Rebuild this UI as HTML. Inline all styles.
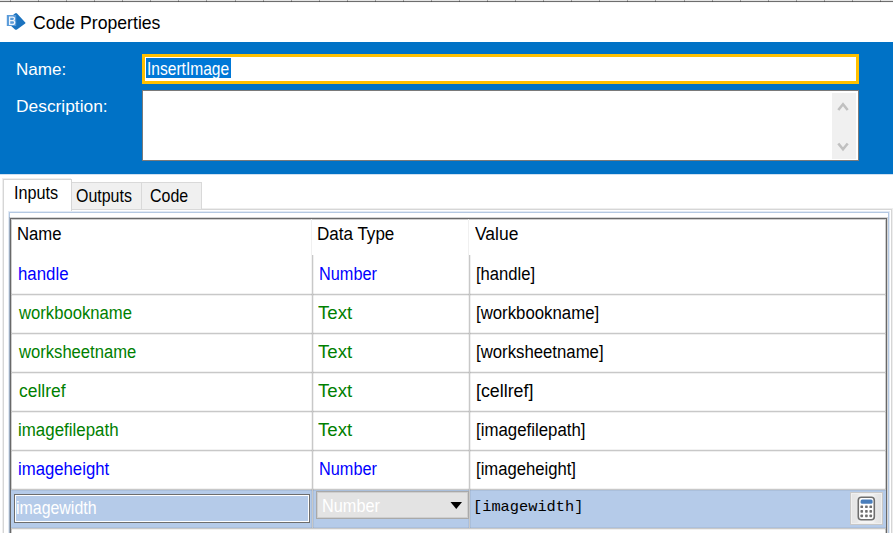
<!DOCTYPE html>
<html><head><meta charset="utf-8"><style>
html,body{margin:0;padding:0;}
body{width:893px;height:533px;overflow:hidden;position:relative;background:#fff;font-family:"Liberation Sans",sans-serif;}
.a{position:absolute;box-sizing:border-box;}
.t{position:absolute;white-space:nowrap;transform-origin:0 0;display:block;}
</style></head><body>
<div class="a" style="left:0;top:0;width:893px;height:1px;background:#e4e4e4"></div>
<div class="a" style="left:0;top:1px;width:893px;height:1px;background:#6e6e6e"></div>
<div class="a" style="left:0;top:2px;width:893px;height:1px;background:#f6f6f6"></div>
<div style="position:absolute;left:10px;top:0;width:1px;height:1px;background:#a0a0a0"></div><div style="position:absolute;left:10px;top:1px;width:1px;height:1px;background:#555"></div><div style="position:absolute;left:38px;top:0;width:1px;height:1px;background:#a0a0a0"></div><div style="position:absolute;left:38px;top:1px;width:1px;height:1px;background:#555"></div><div style="position:absolute;left:66px;top:0;width:1px;height:1px;background:#a0a0a0"></div><div style="position:absolute;left:66px;top:1px;width:1px;height:1px;background:#555"></div><div style="position:absolute;left:94px;top:0;width:1px;height:1px;background:#a0a0a0"></div><div style="position:absolute;left:94px;top:1px;width:1px;height:1px;background:#555"></div><div style="position:absolute;left:122px;top:0;width:1px;height:1px;background:#a0a0a0"></div><div style="position:absolute;left:122px;top:1px;width:1px;height:1px;background:#555"></div><div style="position:absolute;left:150px;top:0;width:1px;height:1px;background:#a0a0a0"></div><div style="position:absolute;left:150px;top:1px;width:1px;height:1px;background:#555"></div><div style="position:absolute;left:178px;top:0;width:1px;height:1px;background:#a0a0a0"></div><div style="position:absolute;left:178px;top:1px;width:1px;height:1px;background:#555"></div><div style="position:absolute;left:206px;top:0;width:1px;height:1px;background:#a0a0a0"></div><div style="position:absolute;left:206px;top:1px;width:1px;height:1px;background:#555"></div><div style="position:absolute;left:235px;top:0;width:1px;height:1px;background:#a0a0a0"></div><div style="position:absolute;left:235px;top:1px;width:1px;height:1px;background:#555"></div><div style="position:absolute;left:263px;top:0;width:1px;height:1px;background:#a0a0a0"></div><div style="position:absolute;left:263px;top:1px;width:1px;height:1px;background:#555"></div><div style="position:absolute;left:291px;top:0;width:1px;height:1px;background:#a0a0a0"></div><div style="position:absolute;left:291px;top:1px;width:1px;height:1px;background:#555"></div><div style="position:absolute;left:319px;top:0;width:1px;height:1px;background:#a0a0a0"></div><div style="position:absolute;left:319px;top:1px;width:1px;height:1px;background:#555"></div><div style="position:absolute;left:347px;top:0;width:1px;height:1px;background:#a0a0a0"></div><div style="position:absolute;left:347px;top:1px;width:1px;height:1px;background:#555"></div><div style="position:absolute;left:375px;top:0;width:1px;height:1px;background:#a0a0a0"></div><div style="position:absolute;left:375px;top:1px;width:1px;height:1px;background:#555"></div><div style="position:absolute;left:403px;top:0;width:1px;height:1px;background:#a0a0a0"></div><div style="position:absolute;left:403px;top:1px;width:1px;height:1px;background:#555"></div><div style="position:absolute;left:431px;top:0;width:1px;height:1px;background:#a0a0a0"></div><div style="position:absolute;left:431px;top:1px;width:1px;height:1px;background:#555"></div><div style="position:absolute;left:459px;top:0;width:1px;height:1px;background:#a0a0a0"></div><div style="position:absolute;left:459px;top:1px;width:1px;height:1px;background:#555"></div><div style="position:absolute;left:487px;top:0;width:1px;height:1px;background:#a0a0a0"></div><div style="position:absolute;left:487px;top:1px;width:1px;height:1px;background:#555"></div><div style="position:absolute;left:515px;top:0;width:1px;height:1px;background:#a0a0a0"></div><div style="position:absolute;left:515px;top:1px;width:1px;height:1px;background:#555"></div><div style="position:absolute;left:543px;top:0;width:1px;height:1px;background:#a0a0a0"></div><div style="position:absolute;left:543px;top:1px;width:1px;height:1px;background:#555"></div><div style="position:absolute;left:571px;top:0;width:1px;height:1px;background:#a0a0a0"></div><div style="position:absolute;left:571px;top:1px;width:1px;height:1px;background:#555"></div><div style="position:absolute;left:599px;top:0;width:1px;height:1px;background:#a0a0a0"></div><div style="position:absolute;left:599px;top:1px;width:1px;height:1px;background:#555"></div><div style="position:absolute;left:627px;top:0;width:1px;height:1px;background:#a0a0a0"></div><div style="position:absolute;left:627px;top:1px;width:1px;height:1px;background:#555"></div><div style="position:absolute;left:655px;top:0;width:1px;height:1px;background:#a0a0a0"></div><div style="position:absolute;left:655px;top:1px;width:1px;height:1px;background:#555"></div><div style="position:absolute;left:684px;top:0;width:1px;height:1px;background:#a0a0a0"></div><div style="position:absolute;left:684px;top:1px;width:1px;height:1px;background:#555"></div><div style="position:absolute;left:712px;top:0;width:1px;height:1px;background:#a0a0a0"></div><div style="position:absolute;left:712px;top:1px;width:1px;height:1px;background:#555"></div><div style="position:absolute;left:740px;top:0;width:1px;height:1px;background:#a0a0a0"></div><div style="position:absolute;left:740px;top:1px;width:1px;height:1px;background:#555"></div><div style="position:absolute;left:768px;top:0;width:1px;height:1px;background:#a0a0a0"></div><div style="position:absolute;left:768px;top:1px;width:1px;height:1px;background:#555"></div><div style="position:absolute;left:796px;top:0;width:1px;height:1px;background:#a0a0a0"></div><div style="position:absolute;left:796px;top:1px;width:1px;height:1px;background:#555"></div><div style="position:absolute;left:824px;top:0;width:1px;height:1px;background:#a0a0a0"></div><div style="position:absolute;left:824px;top:1px;width:1px;height:1px;background:#555"></div><div style="position:absolute;left:852px;top:0;width:1px;height:1px;background:#a0a0a0"></div><div style="position:absolute;left:852px;top:1px;width:1px;height:1px;background:#555"></div><div style="position:absolute;left:880px;top:0;width:1px;height:1px;background:#a0a0a0"></div><div style="position:absolute;left:880px;top:1px;width:1px;height:1px;background:#555"></div>
<svg class="a" style="left:0;top:0" width="40" height="40" viewBox="0 0 40 40">
  <path d="M15 13.6 Q16 12.6 17 13.6 L25.3 22.4 Q25.8 23 25.2 23.6 L17 29.4 Q16 30.1 15 29.4 L9 24 L9 18 Z" fill="#1b73bf"/>
  <rect x="6.8" y="15" width="9.4" height="11" fill="#5a9bd9"/>
  <path d="M9.6 17.1 h3.2 a1.75 1.75 0 0 1 0 3.5 h-3.2 z M9.6 20.6 h3.2 a1.9 1.9 0 0 1 0 3.8 h-3.2 z" fill="none" stroke="#fff" stroke-width="1.3" opacity="0.9"/>
</svg>
<div class="a" style="left:0;top:42px;width:893px;height:132px;background:#0072c6;box-shadow:0 1px 0 #cfe0f1"></div>
<div class="a" style="left:142px;top:54px;width:717px;height:30px;border:3px solid #ffc000;background:#fff"></div>
<div class="a" style="left:146px;top:58px;width:85px;height:20px;background:#0078d7"></div>
<div class="a" style="left:142px;top:90px;width:717px;height:71px;border:1px solid #7a7a7a;background:#fff"></div>
<div class="a" style="left:832px;top:93px;width:24px;height:66px;background:#f0f0f0"></div>
<svg class="a" style="left:832px;top:93px" width="24" height="66" viewBox="0 0 24 66">
  <path d="M6.3 17 L11 11.2 L15.7 17" fill="none" stroke="#c0c0c0" stroke-width="2.6"/>
  <path d="M6.3 50.5 L11 56.3 L15.7 50.5" fill="none" stroke="#c0c0c0" stroke-width="2.6"/>
</svg>
<!-- tab page -->
<div class="a" style="left:3px;top:209px;width:889px;height:330px;border:1px solid #d6d6d6;box-shadow:0 0 0 1px #eeeeee;background:#fff"></div>
<div class="a" style="left:71px;top:182px;width:71px;height:28px;border:1px solid #d9d9d9;background:#f0f0f0"></div>
<div class="a" style="left:141px;top:182px;width:61px;height:28px;border:1px solid #d9d9d9;background:#f0f0f0"></div>
<div class="a" style="left:3px;top:179px;width:69px;height:32px;border:1px solid #d6d6d6;border-bottom:none;background:#fff;box-shadow:-1px -1px 0 #eeeeee"></div>
<!-- inner frame -->
<div class="a" style="left:9px;top:212px;width:880px;height:330px;border:1px solid #b4c8e2;box-shadow:0 0 0 1px #e2eaf4;background:#fff"></div>
<div class="a" style="left:10px;top:218px;width:877px;height:330px;border:1px solid #686868;box-shadow:0 0 0 1px rgba(90,90,90,0.25), inset 0 0 0 1px rgba(90,90,90,0.3);background:#fff"></div>
<!-- header separators -->
<div class="a" style="left:311px;top:219px;width:1px;height:36px;background:#f0f0f0"></div>
<div class="a" style="left:468px;top:219px;width:1px;height:36px;background:#f0f0f0"></div>
<!-- selected row -->
<div class="a" style="left:11px;top:490px;width:875px;height:38px;background:#b5cbe9"></div>
<div class="a" style="left:11px;top:294px;width:875px;height:1px;background:#c8c8c8;box-shadow:0 1px 0 rgba(0,0,0,0.06),0 -1px 0 rgba(0,0,0,0.05)"></div>
<div class="a" style="left:11px;top:333px;width:875px;height:1px;background:#c8c8c8;box-shadow:0 1px 0 rgba(0,0,0,0.06),0 -1px 0 rgba(0,0,0,0.05)"></div>
<div class="a" style="left:11px;top:372px;width:875px;height:1px;background:#c8c8c8;box-shadow:0 1px 0 rgba(0,0,0,0.06),0 -1px 0 rgba(0,0,0,0.05)"></div>
<div class="a" style="left:11px;top:411px;width:875px;height:1px;background:#c8c8c8;box-shadow:0 1px 0 rgba(0,0,0,0.06),0 -1px 0 rgba(0,0,0,0.05)"></div>
<div class="a" style="left:11px;top:450px;width:875px;height:1px;background:#c8c8c8;box-shadow:0 1px 0 rgba(0,0,0,0.06),0 -1px 0 rgba(0,0,0,0.05)"></div>
<div class="a" style="left:11px;top:489px;width:875px;height:1px;background:#c8c8c8;box-shadow:0 1px 0 rgba(0,0,0,0.06),0 -1px 0 rgba(0,0,0,0.05)"></div>
<div class="a" style="left:11px;top:528px;width:875px;height:1px;background:#c8c8c8;box-shadow:0 1px 0 rgba(0,0,0,0.06),0 -1px 0 rgba(0,0,0,0.05)"></div>
<div class="a" style="left:312px;top:255px;width:1px;height:273px;background:#c8c8c8;box-shadow:1px 0 0 rgba(0,0,0,0.06),-1px 0 0 rgba(0,0,0,0.05)"></div>
<div class="a" style="left:469px;top:255px;width:1px;height:273px;background:#c8c8c8;box-shadow:1px 0 0 rgba(0,0,0,0.06),-1px 0 0 rgba(0,0,0,0.05)"></div>
<!-- edit -->
<div class="a" style="left:14px;top:494px;width:296px;height:29px;border:1px solid #6d6d6d;background:#b5cbe9;box-shadow:inset 0 0 0 1px #fff"></div>
<!-- combo -->
<div class="a" style="left:316px;top:491px;width:153px;height:28px;border:1px solid #a9a9a9;background:#e3e3e3;box-shadow:inset 0 0 0 1px #cfcfcf"></div>
<svg class="a" style="left:445px;top:498px" width="20" height="14" viewBox="0 0 20 14"><path d="M5.5 4 L17 4 L11.25 11 Z" fill="#000"/></svg>
<!-- calc button -->
<div class="a" style="left:850px;top:492px;width:33px;height:33px;border:1px solid #c8c8c8;background:linear-gradient(90deg,#e4e4e4 0%,#e8e8e8 20%,#f4f4f4 30%,#f4f4f4 70%,#e8e8e8 80%,#e2e2e2 100%);box-shadow:inset 0 0 0 1px #f0f0f0"></div>
<svg class="a" style="left:850px;top:492px" width="33" height="33" viewBox="0 0 33 33">
  <rect x="8.3" y="5.3" width="16" height="22.4" rx="3" fill="#fff" stroke="#6e6e6e" stroke-width="1.6"/>
  <rect x="10.6" y="7.6" width="12" height="4.2" rx="1.5" fill="#4a7ebb"/>
  <rect x="10.45" y="13.45" width="2.6" height="2.6" rx="0.6" fill="#707070"/><rect x="10.45" y="18.10" width="2.6" height="2.6" rx="0.6" fill="#707070"/><rect x="10.45" y="22.60" width="2.6" height="2.6" rx="0.6" fill="#707070"/><rect x="15.10" y="13.45" width="2.6" height="2.6" rx="0.6" fill="#707070"/><rect x="15.10" y="18.10" width="2.6" height="2.6" rx="0.6" fill="#707070"/><rect x="15.10" y="22.60" width="2.6" height="2.6" rx="0.6" fill="#707070"/><rect x="19.45" y="13.45" width="2.6" height="2.6" rx="0.6" fill="#707070"/><rect x="19.45" y="18.10" width="2.6" height="2.6" rx="0.6" fill="#707070"/><rect x="19.45" y="22.60" width="2.6" height="2.6" rx="0.6" fill="#707070"/>
</svg>
<span class="t" id="t0" style="left:32.75px;top:12px;font-size:19.0px;line-height:21px;color:#000;font-family:'Liberation Sans', sans-serif;transform:scaleX(0.9281);">Code Properties</span>
<span class="t" id="t1" style="left:15.52px;top:60px;font-size:16.6px;line-height:19px;color:#fff;font-family:'Liberation Sans', sans-serif;transform:scaleX(1.0289);">Name:</span>
<span class="t" id="t2" style="left:15.96px;top:97px;font-size:16.4px;line-height:18px;color:#fff;font-family:'Liberation Sans', sans-serif;transform:scaleX(1.0593);">Description:</span>
<span class="t" id="t3" style="left:146.51px;top:59px;font-size:18.2px;line-height:20px;color:#fff;font-family:'Liberation Sans', sans-serif;transform:scaleX(0.8555);">InsertImage</span>
<span class="t" id="t4" style="left:13.94px;top:182px;font-size:18.8px;line-height:21px;color:#000;font-family:'Liberation Sans', sans-serif;transform:scaleX(0.8641);">Inputs</span>
<span class="t" id="t5" style="left:76.21px;top:185px;font-size:18.6px;line-height:21px;color:#000;font-family:'Liberation Sans', sans-serif;transform:scaleX(0.8580);">Outputs</span>
<span class="t" id="t6" style="left:149.65px;top:185px;font-size:18.6px;line-height:21px;color:#000;font-family:'Liberation Sans', sans-serif;transform:scaleX(0.8581);">Code</span>
<span class="t" id="t7" style="left:16.75px;top:223px;font-size:19.2px;line-height:21px;color:#000;font-family:'Liberation Sans', sans-serif;transform:scaleX(0.8709);">Name</span>
<span class="t" id="t8" style="left:316.67px;top:223px;font-size:19.2px;line-height:21px;color:#000;font-family:'Liberation Sans', sans-serif;transform:scaleX(0.8876);">Data Type</span>
<span class="t" id="t9" style="left:474.52px;top:223px;font-size:19.2px;line-height:21px;color:#000;font-family:'Liberation Sans', sans-serif;transform:scaleX(0.9097);">Value</span>
<span class="t" id="t10" style="left:18.23px;top:263px;font-size:19.2px;line-height:21px;color:#0000ff;font-family:'Liberation Sans', sans-serif;transform:scaleX(0.8764);">handle</span>
<span class="t" id="t11" style="left:319.09px;top:263px;font-size:19.2px;line-height:21px;color:#0000ff;font-family:'Liberation Sans', sans-serif;transform:scaleX(0.8491);">Number</span>
<span class="t" id="t12" style="left:475.69px;top:263px;font-size:19.2px;line-height:21px;color:#000;font-family:'Liberation Sans', sans-serif;transform:scaleX(0.8661);">[handle]</span>
<span class="t" id="t13" style="left:19.37px;top:302px;font-size:19.2px;line-height:21px;color:#008000;font-family:'Liberation Sans', sans-serif;transform:scaleX(0.8679);">workbookname</span>
<span class="t" id="t14" style="left:318.05px;top:302px;font-size:19.2px;line-height:21px;color:#008000;font-family:'Liberation Sans', sans-serif;transform:scaleX(0.9714);">Text</span>
<span class="t" id="t15" style="left:475.69px;top:302px;font-size:19.2px;line-height:21px;color:#000;font-family:'Liberation Sans', sans-serif;transform:scaleX(0.8746);">[workbookname]</span>
<span class="t" id="t16" style="left:19.37px;top:341px;font-size:19.2px;line-height:21px;color:#008000;font-family:'Liberation Sans', sans-serif;transform:scaleX(0.8658);">worksheetname</span>
<span class="t" id="t17" style="left:318.05px;top:341px;font-size:19.2px;line-height:21px;color:#008000;font-family:'Liberation Sans', sans-serif;transform:scaleX(0.9714);">Text</span>
<span class="t" id="t18" style="left:475.69px;top:341px;font-size:19.2px;line-height:21px;color:#000;font-family:'Liberation Sans', sans-serif;transform:scaleX(0.8733);">[worksheetname]</span>
<span class="t" id="t19" style="left:18.72px;top:380px;font-size:19.2px;line-height:21px;color:#008000;font-family:'Liberation Sans', sans-serif;transform:scaleX(0.9098);">cellref</span>
<span class="t" id="t20" style="left:318.05px;top:380px;font-size:19.2px;line-height:21px;color:#008000;font-family:'Liberation Sans', sans-serif;transform:scaleX(0.9714);">Text</span>
<span class="t" id="t21" style="left:475.62px;top:380px;font-size:19.2px;line-height:21px;color:#000;font-family:'Liberation Sans', sans-serif;transform:scaleX(0.9278);">[cellref]</span>
<span class="t" id="t22" style="left:18.26px;top:419px;font-size:19.2px;line-height:21px;color:#008000;font-family:'Liberation Sans', sans-serif;transform:scaleX(0.8812);">imagefilepath</span>
<span class="t" id="t23" style="left:318.05px;top:419px;font-size:19.2px;line-height:21px;color:#008000;font-family:'Liberation Sans', sans-serif;transform:scaleX(0.9714);">Text</span>
<span class="t" id="t24" style="left:475.69px;top:419px;font-size:19.2px;line-height:21px;color:#000;font-family:'Liberation Sans', sans-serif;transform:scaleX(0.8773);">[imagefilepath]</span>
<span class="t" id="t25" style="left:18.27px;top:458px;font-size:19.2px;line-height:21px;color:#0000ff;font-family:'Liberation Sans', sans-serif;transform:scaleX(0.8718);">imageheight</span>
<span class="t" id="t26" style="left:319.09px;top:458px;font-size:19.2px;line-height:21px;color:#0000ff;font-family:'Liberation Sans', sans-serif;transform:scaleX(0.8491);">Number</span>
<span class="t" id="t27" style="left:475.71px;top:458px;font-size:19.2px;line-height:21px;color:#000;font-family:'Liberation Sans', sans-serif;transform:scaleX(0.8679);">[imageheight]</span>
<span class="t" id="t28" style="left:16.29px;top:497px;font-size:19.2px;line-height:21px;color:#fff;font-family:'Liberation Sans', sans-serif;transform:scaleX(0.8296);">imagewidth</span>
<span class="t" id="t29" style="left:321.59px;top:495px;font-size:19.2px;line-height:21px;color:#fff;font-family:'Liberation Sans', sans-serif;transform:scaleX(0.8491);">Number</span>
<span class="t" id="t30" style="left:473.13px;top:499px;font-size:14.6px;line-height:16px;color:#000;font-family:'Liberation Mono', monospace;transform:scaleX(1.0501);">[imagewidth]</span>
</body></html>
